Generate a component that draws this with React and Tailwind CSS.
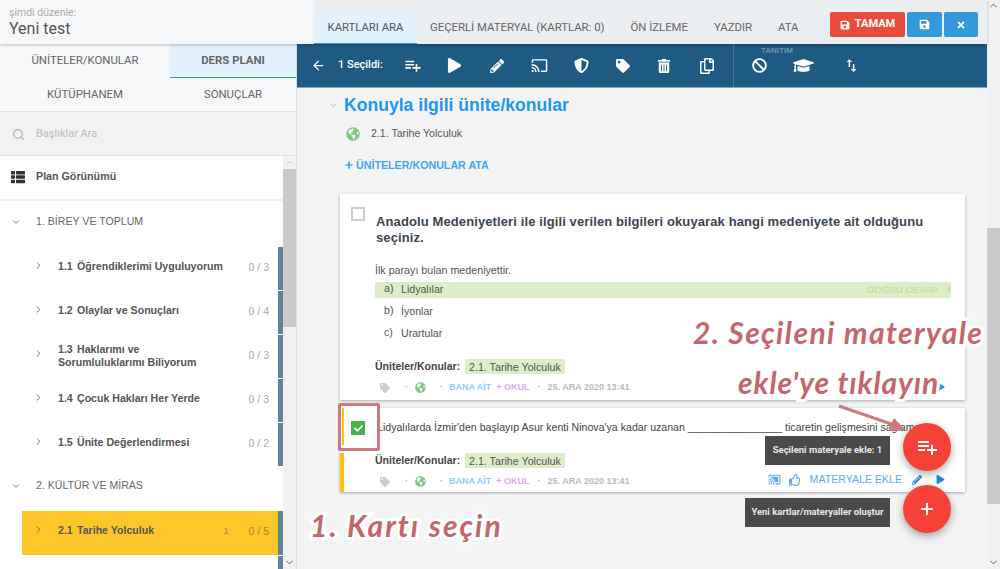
import React from 'react';
import { ChevronDown, ChevronRight, ChevronUp, Search, Plus, ArrowLeft } from 'lucide-react';
import {
  FaSave, FaTimes, FaPlay, FaPencilAlt, FaTag, FaTrashAlt, FaRegCopy, FaBan,
  FaGraduationCap, FaGlobeAmericas, FaThList, FaRegThumbsUp, FaCheck, FaCaretLeft, FaShieldAlt,
} from 'react-icons/fa';
import { MdPlaylistAdd, MdCastConnected, MdSwapVert, MdCast } from 'react-icons/md';

const tabs = ['GEÇERLİ MATERYAL (KARTLAR: 0)', 'ÖN İZLEME', 'YAZDIR', 'ATA'];

const lessons = [
  { id: '1.1', name: 'Öğrendiklerimi Uyguluyorum', score: '0 / 3' },
  { id: '1.2', name: 'Olaylar ve Sonuçları', score: '0 / 4' },
  { id: '1.3', name: 'Haklarımı ve', second: 'Sorumluluklarımı Biliyorum', score: '0 / 3' },
  { id: '1.4', name: 'Çocuk Hakları Her Yerde', score: '0 / 3' },
  { id: '1.5', name: 'Ünite Değerlendirmesi', score: '0 / 2' },
];

const LessonRow = ({ item }) => (
  <div className="flex h-[43px] mb-px">
    <div className="relative flex-1 ml-[22px] pl-[36px] pr-[9px] pb-[4px] flex items-center text-[10.6px] font-bold text-[#555] leading-[13px]">
      <ChevronRight className="absolute left-[11px] top-[13px] w-[11px] h-[11px] text-[#666]" />
      <div className={item.second ? 'flex-1 mt-[3px]' : 'flex-1'}>
        <div className="flex"><span className="w-[19px]">{item.id}</span><span>{item.name}</span></div>
        {item.second && <div>{item.second}</div>}
      </div>
      <span className="text-[10.5px] font-normal text-[#aaa] pt-[2px]">{item.score}</span>
    </div>
    <div className="w-[5px] bg-[#5f8397]" />
  </div>
);

const Sidebar = () => (
  <aside className="w-[297px] shrink-0 flex flex-col border-r border-[#ddd] bg-[#f6f7f9] font-['Roboto',sans-serif]">
    <div className="grid grid-cols-[170px_1fr] text-[11.4px] text-[#666]">
      <div className="h-[34px] flex items-center justify-center">ÜNİTELER/KONULAR</div>
      <div className="h-[34px] flex items-center justify-center font-bold bg-[#e3f2fd] border-b-[1.5px] border-[#2196f3]">DERS PLANI</div>
      <div className="h-[33px] flex items-center justify-center">KÜTÜPHANEM</div>
      <div className="h-[33px] flex items-center justify-center">SONUÇLAR</div>
    </div>
    <div className="h-[45px] flex items-center gap-[11px] pl-[12px] pt-[1px] bg-[#f2f2f2] border-y border-[#e2e2e2] text-[11px] text-[#bbb]">
      <Search className="w-[13px] h-[13px] text-[#aaa]" />
      <span>Başlıklar Ara</span>
    </div>
    <div className="flex-1 flex min-h-0 bg-white overflow-hidden font-['Liberation_Sans',sans-serif]">
      <div className="flex-1 min-w-0">
        <div className="h-[45px] flex items-center gap-[11px] pl-[11px] text-[10.7px] font-bold text-[#555] border-b-2 border-[#f0f0f0] pb-[2px]">
          <FaThList className="w-[14px] h-[14px] text-[#333]" />
          <span>Plan Görünümü</span>
        </div>
        <div className="h-[46px] flex items-center gap-[15px] pl-[11px] pb-[5px] text-[10.6px] text-[#666]">
          <ChevronDown className="w-[10px] h-[10px]" />
          <span>1. BİREY VE TOPLUM</span>
        </div>
        {lessons.map((item) => <LessonRow key={item.id} item={item} />)}
        <div className="h-[44px] flex items-center gap-[15px] pl-[11px] pb-[6px] text-[10.6px] text-[#666]">
          <ChevronDown className="w-[10px] h-[10px]" />
          <span>2. KÜLTÜR VE MİRAS</span>
        </div>
        <div className="flex h-[44px] mb-px">
          <div className="relative flex-1 ml-[22px] pl-[36px] pr-[9px] pb-[4px] flex items-center text-[10.6px] font-bold text-[#555] bg-[#ffc629]">
            <ChevronRight className="absolute left-[11px] top-[13px] w-[11px] h-[11px] text-[#666]" />
            <span className="w-[19px]">2.1</span>
            <span className="flex-1">Tarihe Yolculuk</span>
            <span className="font-normal text-[9px] text-[#a08a3a] mr-[20px] pt-[2px]">1</span>
            <span className="font-normal text-[10.5px] text-[#a08a3a] pt-[2px]">0 / 5</span>
          </div>
          <div className="w-[5px] bg-[#5f8397]" />
        </div>
        <div className="flex justify-end h-[20px]"><div className="w-[5px] bg-[#5f8397]" /></div>
      </div>
      <div className="w-[13px] shrink-0 bg-[#f1f1f1] flex flex-col items-center">
        <ChevronUp className="w-[10px] h-[13px] text-[#bbb]" />
        <div className="w-full h-[158px] bg-[#c9c9c9]" />
        <ChevronDown className="w-[11px] h-[11px] text-[#555] mt-auto mb-[1px]" />
      </div>
    </div>
  </aside>
);

const Toolbar = () => {
  const items = [
    [MdPlaylistAdd, 'text-[19px]', 42], [FaPlay, 'text-[15px]', 43], [FaPencilAlt, 'text-[14px]', 42],
    [MdCast, 'text-[17px]', 43], [FaShieldAlt, 'text-[15px]', 41], [FaTag, 'text-[14px]', 41],
    [FaTrashAlt, 'text-[14px]', 42], [FaRegCopy, 'text-[16px]', 43],
  ];
  return (
    <div className="h-[44px] shrink-0 bg-[#1f5a82] border-b border-[#8aa5b8] flex items-center text-white">
      <ArrowLeft className="w-[15px] h-[15px] ml-[14px]" />
      <span className="ml-[12px] w-[52px] text-[11px] font-medium font-['Roboto',sans-serif]">1 Seçildi:</span>
      <div className="flex items-center h-full pl-[1px]">
        {items.map(([Icon, size, w], i) => (
          <span key={i} className={`flex justify-center ${size}`} style={{ width: w }}><Icon /></span>
        ))}
      </div>
      <div className="relative flex items-center self-stretch ml-[5px] border-l border-[#47789a] pl-[18px] gap-[26px]">
        <span className="absolute left-[27px] top-[1px] text-[8px] text-[#6f93ac] font-bold">TANITIM</span>
        <FaBan className="text-[15px]" />
        <FaGraduationCap className="text-[21px]" />
        <MdSwapVert className="text-[17px] ml-[3px]" />
      </div>
    </div>
  );
};

const Meta = () => (
  <div className="flex items-center text-[9px] font-bold h-[14px]">
    <FaTag className="ml-[5px] text-[10px] text-[#ccc]" />
    <span className="ml-[15px] text-[#aaa]">·</span>
    <FaGlobeAmericas className="ml-[7px] text-[11px] text-[#81c784]" />
    <span className="ml-[14px] text-[#aaa]">·</span>
    <span className="ml-[6px] text-[#90caf9]">BANA AİT</span>
    <span className="ml-[5px] text-[#dba8e6]">+ OKUL</span>
    <span className="ml-[8px] text-[#aaa]">·</span>
    <span className="ml-[7px] text-[#bbb]">25. ARA 2020 13:41</span>
  </div>
);

const TopicLine = ({ className }) => (
  <div className={`flex items-center text-[#444] ${className}`}>
    <span className="font-bold w-[90px] text-[10.5px]">Üniteler/Konular:</span>
    <span className="h-[15px] px-[4px] flex items-center bg-[#dcedc8] rounded-[2px] text-[#555] text-[10.7px]">2.1. Tarihe Yolculuk</span>
  </div>
);

const AnswerRow = ({ letter, text, correct }) => (
  <div className={`flex items-center h-[16px] mb-[6px] pl-[9px] text-[10.6px] text-[#555] ${correct ? 'bg-[#dcedc8]' : ''}`}>
    <span className="w-[17px] -mt-[2px]">{letter}</span>
    <span>{text}</span>
    {correct && (
      <span className="ml-auto -mr-[3px] flex items-center gap-[5px] text-[#c5e1a5] font-bold text-[9.6px]">
        DOĞRU CEVAP <FaCaretLeft className="text-[11px]" />
      </span>
    )}
  </div>
);

const Main = () => (
  <main className="relative flex-1 min-w-0 flex flex-col bg-[#f4f4f4] font-['Liberation_Sans',sans-serif] overflow-hidden">
    <Toolbar />
    <div className="pl-[43px] pr-[22px]">
      <div className="relative flex items-center h-[34px] pl-[4px] pt-[1px] text-[17.6px] font-bold text-[#2196f3]">
        <ChevronDown className="absolute -left-[11px] top-[13px] w-[9px] h-[9px] text-[#7aa9d8]" />
        Konuyla ilgili ünite/konular
      </div>
      <div className="flex items-center h-[22px] pl-[6px] gap-[11px] text-[10.6px] text-[#555] mt-[1px]">
        <FaGlobeAmericas className="text-[14px] text-[#81c784]" />
        <span>2.1. Tarihe Yolculuk</span>
      </div>
      <div className="flex items-center gap-[2px] mt-[11px] pl-[4px] h-[18px] text-[10.7px] font-bold text-[#42a5f5]">
        <Plus className="w-[10px] h-[10px]" strokeWidth={4} />
        <span>ÜNİTELER/KONULAR ATA</span>
      </div>
      <section className="relative mt-[20px] h-[206px] bg-white shadow-[0_1px_3px_rgba(0,0,0,0.3)] pl-[35px] pr-[14px] pt-[20px]">
        <span className="absolute left-[11px] top-[13px] w-[14px] h-[14px] border-2 border-[#ccc]" />
        <h2 className="ml-px text-[13px] leading-[16px] font-bold text-[#3d4451] tracking-[0.11px]">
          Anadolu Medeniyetleri ile ilgili verilen bilgileri okuyarak hangi medeniyete ait olduğunu seçiniz.
        </h2>
        <p className="mt-[16px] mb-[5px] text-[10.7px] text-[#555] h-[15px]">İlk parayı bulan medeniyettir.</p>
        <AnswerRow letter="a)" text="Lidyalılar" correct />
        <AnswerRow letter="b)" text="İyonlar" />
        <AnswerRow letter="c)" text="Urartular" />
        <TopicLine className="mt-[17px]" />
        <div className="mt-[6px]"><Meta /></div>
        <FaPlay className="absolute right-[20px] top-[189px] text-[8px] text-[#2196f3]" />
      </section>
      <section className="relative mt-[8px] h-[84px] bg-white shadow-[0_1px_3px_rgba(0,0,0,0.3)] pl-[35px] pr-[4px] pt-[12px]">
        <span className="absolute left-0 top-[45px] bottom-0 w-[4px] bg-[#ffc107]" />
        <p className="ml-[2px] text-[10.6px] leading-[14px] text-[#444] whitespace-nowrap">
          Lidyalılarda İzmir'den başlayıp Asur kenti Ninova'ya kadar uzanan ________________ ticaretin gelişmesini sağlamış
        </p>
        <TopicLine className="mt-[19px]" />
        <div className="flex items-center mt-[3px]">
          <Meta />
          <div className="ml-auto flex items-center text-[#64a8f0] mr-[16px] mb-[4px]">
            <MdCastConnected className="text-[13px]" />
            <FaRegThumbsUp className="ml-[8px] text-[12px]" />
            <span className="ml-[9px] text-[10.6px]">MATERYALE EKLE</span>
            <FaPencilAlt className="ml-[10px] text-[10px] text-[#1e88e5]" />
            <FaPlay className="ml-[14px] text-[9px] text-[#1e88e5]" />
          </div>
        </div>
      </section>
    </div>

    <div className="absolute left-[41px] top-[359px] w-[42px] h-[48px] border-[3px] border-[#c97b80] rounded-[2px] bg-white flex">
      <span className="ml-[1px] w-[2px] h-[37px] mt-[2px] bg-[#ffc107]" />
      <span className="ml-[7px] mt-[15px] w-[14px] h-[14px] bg-[#4caf50] flex items-center justify-center text-white text-[9px]"><FaCheck /></span>
    </div>
  </main>
);

const Overlays = () => {
  const note = "absolute whitespace-nowrap font-['Lato',sans-serif] italic font-bold text-[#c4666c] [-webkit-text-stroke:6px_white] [paint-order:stroke_fill]";
  return (
    <>
      <div className="absolute left-[765px] top-[436px] w-[125px] h-[29px] bg-[#4a4a4a] text-[#e8e8e8] text-[9.5px] font-bold font-['Roboto',sans-serif] flex items-center justify-center">Seçileni materyale ekle: 1</div>
      <div className="absolute left-[745px] top-[498px] w-[145px] h-[29px] bg-[#4a4a4a] text-[#e8e8e8] text-[9.4px] font-bold font-['Roboto',sans-serif] flex items-center justify-center">Yeni kartlar/materyaller oluştur</div>
      <div className="absolute left-[903px] top-[423px] w-[48px] h-[48px] rounded-full bg-[#f44336] shadow-[0_3px_8px_rgba(0,0,0,0.35)] flex items-center justify-center text-white text-[24px]"><MdPlaylistAdd /></div>
      <div className="absolute left-[903px] top-[485px] w-[48px] h-[48px] rounded-full bg-[#f44336] shadow-[0_3px_8px_rgba(0,0,0,0.35)] flex items-center justify-center text-white"><Plus className="w-[18px] h-[18px]" strokeWidth={2.5} /></div>
      <span className={`${note} left-[693px] top-[312px] text-[30px] leading-[40px] tracking-[1.4px]`}>2. Seçileni materyale</span>
      <span className={`${note} left-[738px] top-[362px] text-[30px] leading-[40px] tracking-[0.9px]`}>ekle'ye tıklayın</span>
      <span className={`${note} left-[310px] top-[505px] text-[30px] leading-[40px] tracking-[2px]`}>1. Kartı seçin</span>
      <svg className="absolute left-[830px] top-[400px]" width="90" height="40" viewBox="0 0 90 40">
        <path d="M9 6 L64 25" stroke="#c97b80" strokeWidth="3" fill="none" />
        <path d="M75 30 L58 31 L64 18 Z" fill="#c97b80" />
      </svg>
    </>
  );
};

export default function App() {
  return (
    <div className="relative w-[1000px] h-[569px] flex overflow-hidden bg-[#f4f4f4]">
      <div className="flex-1 min-w-0 flex flex-col">
        <header className="h-[44px] shrink-0 flex bg-[#eceff1] shadow-[0_1px_3px_rgba(0,0,0,0.25)] z-10 font-['Roboto',sans-serif]">
          <div className="w-[314px] bg-[#f6f7f9] pl-[9px] pt-[6px]">
            <div className="text-[10.5px] leading-[13px] text-[#aaa]">şimdi düzenle:</div>
            <div className="text-[16px] leading-[20px] text-[#555]">Yeni test</div>
          </div>
          <div className="w-[103px] mt-[13px] bg-[#e3f2fd] border-b-[1.5px] border-[#2196f3] flex items-center justify-center text-[11.3px] text-[#555]">KARTLARI ARA</div>
          <nav className="flex items-center pt-[11px] pl-[13px] gap-[26px] text-[11.35px] text-[#666]">
            {tabs.map((t) => <span key={t}>{t}</span>)}
          </nav>
          <div className="ml-auto mr-[9px] mt-[12px] flex gap-[2px] h-[25px] text-white text-[11px] font-bold">
            <button className="w-[75px] rounded-[2px] bg-[#e74c3c] flex items-center justify-center gap-[5px]"><FaSave className="text-[10px]" /> TAMAM</button>
            <button className="w-[35px] rounded-[2px] bg-[#3498db] flex items-center justify-center"><FaSave className="text-[11px]" /></button>
            <button className="w-[34px] rounded-[2px] bg-[#3498db] flex items-center justify-center"><FaTimes className="text-[10px]" /></button>
          </div>
        </header>
        <div className="flex-1 flex min-h-0">
          <Sidebar />
          <Main />
        </div>
      </div>
      <div className="w-[13px] shrink-0 bg-[#f1f1f1] flex flex-col items-center">
        <ChevronUp className="w-[11px] h-[11px] text-[#555]" />
        <div className="w-full h-[276px] bg-[#c9c9c9] mt-[217px]" />
        <ChevronDown className="w-[11px] h-[11px] text-[#555] mt-auto mb-[1px]" />
      </div>
      <Overlays />
    </div>
  );
}
